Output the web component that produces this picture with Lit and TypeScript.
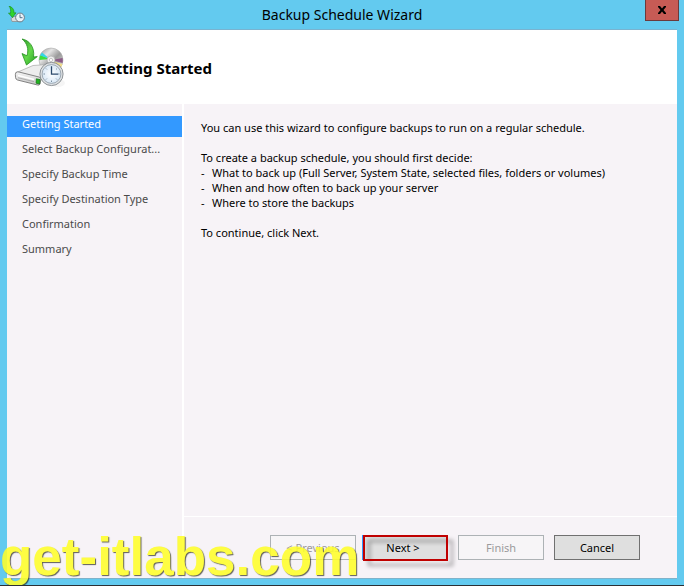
import { LitElement, html, css, svg } from "lit";
import { customElement, state } from "lit/decorators.js";

const backupArt = svg`
  <defs>
    <linearGradient id="arrow" x1="0" y1="0" x2="1" y2="1">
      <stop offset="0" stop-color="#2f9a2a" />
      <stop offset=".5" stop-color="#63d84a" />
      <stop offset="1" stop-color="#1f9a1d" />
    </linearGradient>
    <linearGradient id="disc" x1="0" y1="0" x2="1" y2="1">
      <stop offset="0" stop-color="#8d8d8d" />
      <stop offset=".3" stop-color="#e4e4e4" />
      <stop offset=".55" stop-color="#9a9a9a" />
      <stop offset="1" stop-color="#ececec" />
    </linearGradient>
    <linearGradient id="drive" x1="0" y1="0" x2="0" y2="1">
      <stop offset="0" stop-color="#f6f6f6" />
      <stop offset="1" stop-color="#c4c4c4" />
    </linearGradient>
    <radialGradient id="face">
      <stop offset="0" stop-color="#ffffff" />
      <stop offset="1" stop-color="#d9e8f6" />
    </radialGradient>
  </defs>
  <ellipse cx="44" cy="45" rx="7" ry="4" fill="#000" opacity=".04" />
  <circle cx="37" cy="22" r="12" fill="url(#disc)" stroke="#a9a9a9" stroke-width=".6" />
  <path d="M36 21 26.500 17a12 12 0 0 0-1.300 5z" fill="#3fe03a" />
  <path d="M36 21 28 14.500a12 12 0 0 0-1.800 3z" fill="#35d5e8" />
  <path d="M38 22 48.500 20a12 12 0 0 1 0 5z" fill="#8b5a86" />
  <path d="M38 23 48.500 26a12 12 0 0 1-3.500 6z" fill="#f2dc8a" />
  <circle cx="37" cy="22" r="4" fill="#eee" stroke="#aaa" stroke-width=".7" />
  <circle cx="37" cy="22" r="1.600" fill="#fff" stroke="#999" stroke-width=".5" />
  <path d="M1.500 35 19 27.500l15-1 3 12-12 4z" fill="#ededed" stroke="#a8a8a8" stroke-width=".7" />
  <path d="M2 34.500q-1 1-.5 5 .3 2 2 2.500l20 5q2 .5 2.500-1l1-5q0-1.500-2-2L5 34q-2-.5-3 .5z"
    fill="url(#drive)" stroke="#777" stroke-width=".9" />
  <path d="M4 37.500 20 41.500" stroke="#fff" stroke-width="1.400" />
  <path d="m4 39.700 16 4" stroke="#999" stroke-width=".7" />
  <path d="m22.300 40.800 3.700.7-.4 4.500-3.500-.8z" fill="#20b51e" stroke="#166d16" stroke-width=".7" />
  <path d="M8 1C15 2 21 9 19.500 19l3.800-.4L12.500 27 8 15.500l5 2.300C15 11 13 5 8 1z"
    fill="url(#arrow)" stroke="#25921f" stroke-width=".8" />
  <circle cx="37.500" cy="36" r="11.600" fill="#dfe2e4" stroke="#767c81" stroke-width=".8" />
  <circle cx="37.500" cy="36" r="9.400" fill="url(#face)" stroke="#8b98a3" stroke-width=".8" />
  <path d="M37.500 28v1.500M37.500 42.500v1.500M29.500 36h1.500M44 36h1.500M32 30.500l.9.900M42.100 40.600l.9.900M43 30.500l-.9.900M32.900 40.600l-.9.900"
    stroke="#6f8496" stroke-width=".9" />
  <path d="M37.500 28.500v7.700h6.500" fill="none" stroke="#2c4a6c" stroke-width="1.300" />
`;

const smallArt = svg`
  <path d="m4 12.500 3-2h6v5H5z" fill="#d9dbdb" stroke="#8b8f91" stroke-width=".8" />
  <path d="M2 0c3.500 1 5.300 4 5 7l2-.2L5.500 11.500 1.500 7l2 .3C4 4.500 3.500 2 2 0z"
    fill="#2fd52b" stroke="#1d8f22" stroke-width=".7" />
  <circle cx="13" cy="11.500" r="4.400" fill="#eaf3fa" stroke="#6d7983" stroke-width="1" />
  <path d="M13 8.500v3.200h2.500" fill="none" stroke="#44617c" stroke-width=".9" />
`;

const steps = [
  "Getting Started",
  "Select Backup Configurat...",
  "Specify Backup Time",
  "Specify Destination Type",
  "Confirmation",
  "Summary",
];

const decisions = [
  "What to back up (Full Server, System State, selected files, folders or volumes)",
  "When and how often to back up your server",
  "Where to store the backups",
];

@customElement("app-root")
export class AppRoot extends LitElement {
  static styles = css`
    :host {
      display: flex;
      flex-direction: column;
      box-sizing: border-box;
      min-height: 100vh;
      position: relative;
      overflow: hidden;
      padding: 0 7px 6px;
      border-bottom: 1px solid #2b3034;
      background: #63caef;
      color: #000;
      font: 11px/15px "Noto Sans", "Open Sans", sans-serif;
    }
    .titlebar {
      display: grid;
      grid-template-columns: 36px 1fr 36px;
      height: 29px;
    }
    .small-icon {
      width: 18px;
      height: 18px;
      margin-top: 6px;
    }
    .caption {
      margin: 0;
      text-align: center;
      font-size: 14px;
      font-weight: 400;
      line-height: 29px;
    }
    .close {
      width: 34px;
      height: 21px;
      margin-left: 4px;
      padding: 0;
      border: 1px solid #6b3a3c;
      border-top: 0;
      background: #c75b55;
      display: grid;
      place-items: center;
    }
    .frame {
      flex: 1;
      display: flex;
      flex-direction: column;
      border-top: 1px solid #79b3d0;
      border-bottom: 1px solid #7fb2ca;
      background: #f7f3f7;
    }
    .heading {
      display: flex;
      align-items: center;
      height: 74px;
      background: #fff;
    }
    .big-icon {
      width: 52px;
      height: 52px;
      margin: 0 30px 6px 7px;
    }
    .heading h2 {
      margin: 2px 0 0;
      font-size: 15px;
      line-height: 20px;
      font-weight: 700;
    }
    .body {
      flex: 1;
      display: grid;
      grid-template-columns: 175px 1fr;
    }
    .steps {
      margin: 0;
      padding: 12px 0 0;
      list-style: none;
      display: flex;
      flex-direction: column;
      gap: 4px;
      color: #4a4a4a;
    }
    .step {
      height: 21px;
      padding-left: 15px;
      line-height: 16px;
      white-space: nowrap;
    }
    .step.active {
      background: #3399ff;
      color: #fff;
    }
    .page {
      display: flex;
      flex-direction: column;
      border-left: 2px solid #fff;
    }
    .content {
      flex: 1;
      padding: 16px 17px;
    }
    .content p {
      margin: 0 0 15px;
    }
    .content .lead {
      margin: 0;
    }
    .decisions {
      margin: 0 0 15px;
      padding: 0;
      list-style: none;
    }
    .decisions li {
      display: flex;
    }
    .decisions li::before {
      content: "-";
      width: 11px;
      flex: none;
    }
    .actions {
      display: flex;
      justify-content: flex-end;
      gap: 10px;
      padding: 18px 37px 18px 0;
      border-top: 1px solid #fff;
    }
    .pair {
      display: flex;
      gap: 6px;
    }
    .btn {
      width: 86px;
      height: 25px;
      padding: 0;
      border: 1px solid #707070;
      border-radius: 0;
      background: #dfdfdf;
      color: #000;
      font: inherit;
    }
    .btn:disabled {
      border-color: #adb2b5;
      background: #f7f5f7;
      color: #9c9a9c;
    }
    .btn.next {
      position: relative;
      border-color: #3399ff;
      padding-right: 4px;
    }
    .btn.next::after {
      content: "";
      position: absolute;
      inset: -1px -1px -2px 0;
      border: 2px solid #c00000;
      filter: drop-shadow(5px 5px 2px rgba(0, 0, 0, 0.4));
    }
    .watermark {
      position: absolute;
      left: 0;
      bottom: -2px;
      color: #ffff2a;
      opacity: 0.88;
      font: 700 53px/60px "Liberation Sans", Arial, sans-serif;
      text-shadow: 1px 1px 1px rgba(30, 30, 20, 0.8);
      pointer-events: none;
    }
  `;

  @state() private current = 0;

  render() {
    return html`
      <header class="titlebar">
        <svg class="small-icon" viewBox="0 0 18 18" aria-hidden="true">${smallArt}</svg>
        <h1 class="caption">Backup Schedule Wizard</h1>
        <button class="close" aria-label="Close">
          <svg width="10" height="8" viewBox="0 0 10 8" aria-hidden="true">
            <path d="M1 0h2l2 2.500L7 0h2v1L6.500 4 9 7v1H7L5 5.500 3 8H1V7l2.500-3L1 1z" fill="#000" />
          </svg>
        </button>
      </header>
      <main class="frame">
        <div class="heading">
          <svg class="big-icon" viewBox="0 0 52 52" aria-hidden="true">${backupArt}</svg>
          <h2>${steps[this.current]}</h2>
        </div>
        <div class="body">
          <ol class="steps">
            ${steps.map(
              (name, i) => html`<li class="step ${i === this.current ? "active" : ""}">${name}</li>`
            )}
          </ol>
          <section class="page">
            <div class="content">
              <p>You can use this wizard to configure backups to run on a regular schedule.</p>
              <p class="lead">To create a backup schedule, you should first decide:</p>
              <ul class="decisions">
                ${decisions.map((text) => html`<li>${text}</li>`)}
              </ul>
              <p>To continue, click Next.</p>
            </div>
            <footer class="actions">
              <div class="pair">
                <button class="btn" disabled>&lt; Previous</button>
                <button class="btn next">Next &gt;</button>
              </div>
              <button class="btn" disabled>Finish</button>
              <button class="btn">Cancel</button>
            </footer>
          </section>
        </div>
      </main>
      <div class="watermark">get-itlabs.com</div>
    `;
  }
}
